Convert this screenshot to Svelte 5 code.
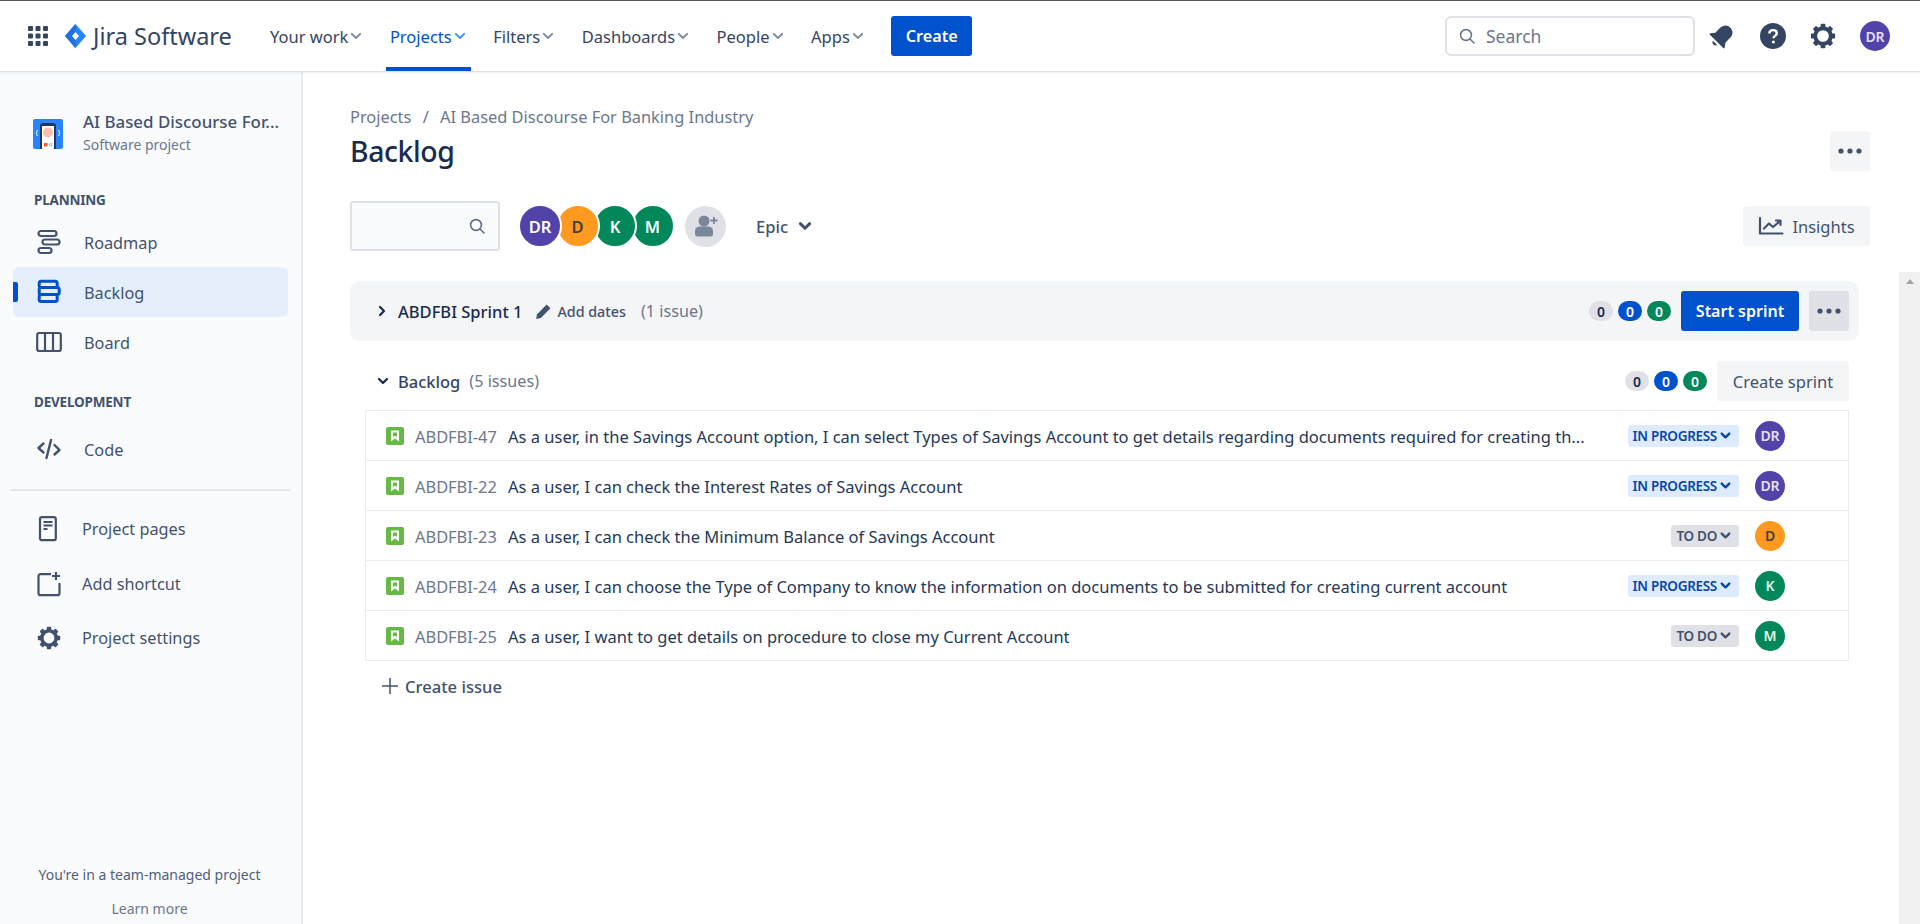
<script lang="ts">
  const nav = [
    { label: 'Your work' },
    { label: 'Projects', active: true },
    { label: 'Filters' },
    { label: 'Dashboards' },
    { label: 'People' },
    { label: 'Apps' }
  ];

  const issues = [
    { key: 'ABDFBI-47', text: 'As a user, in the Savings Account option, I can select Types of Savings Account to get details regarding documents required for creating th...', status: 'IN PROGRESS', who: 'DR', tone: 'purple' },
    { key: 'ABDFBI-22', text: 'As a user, I can check the Interest Rates of Savings Account', status: 'IN PROGRESS', who: 'DR', tone: 'purple' },
    { key: 'ABDFBI-23', text: 'As a user, I can check the Minimum Balance of Savings Account', status: 'TO DO', who: 'D', tone: 'orange' },
    { key: 'ABDFBI-24', text: 'As a user, I can choose the Type of Company to know the information on documents to be submitted for creating current account', status: 'IN PROGRESS', who: 'K', tone: 'green' },
    { key: 'ABDFBI-25', text: 'As a user, I want to get details on procedure to close my Current Account', status: 'TO DO', who: 'M', tone: 'green' }
  ];

  const team = [
    { who: 'DR', tone: 'purple' },
    { who: 'D', tone: 'orange' },
    { who: 'K', tone: 'green' },
    { who: 'M', tone: 'green' }
  ];

  const teeth = [0, 45, 90, 135, 180, 225, 270, 315];
</script>

{#snippet gear(size)}
  <svg width={size} height={size} viewBox="0 0 24 24">
    <circle cx="12" cy="12" r="7.2" fill="none" stroke="currentColor" stroke-width="3.6" />
    {#each teeth as t (t)}
      <rect x="9.8" y="0.8" width="4.4" height="4" rx="0.8" fill="currentColor" transform="rotate({t} 12 12)" />
    {/each}
  </svg>
{/snippet}

{#snippet chev(size, w)}
  <svg width={size} height={size} viewBox="0 0 12 12" fill="none">
    <path d="M2.5 4.2 6 7.7l3.5-3.5" stroke="currentColor" stroke-width={w} stroke-linecap="round" stroke-linejoin="round" />
  </svg>
{/snippet}

{#snippet dots()}
  <svg width="24" height="8" viewBox="0 0 24 8"><circle cx="3" cy="4" r="2.6" fill="#42526e" /><circle cx="12" cy="4" r="2.6" fill="#42526e" /><circle cx="21" cy="4" r="2.6" fill="#42526e" /></svg>
{/snippet}

{#snippet counts()}
  <div class="counts">
    <span class="count grey">0</span>
    <span class="count blue">0</span>
    <span class="count grn">0</span>
  </div>
{/snippet}

<div class="page">
  <header class="top">
    <svg class="waffle" width="20" height="20" viewBox="0 0 20 20" fill="#344563">
      {#each [0, 7.5, 15] as y (y)}
        {#each [0, 7.5, 15] as x (x)}
          <rect {x} {y} width="5" height="5" rx="1" />
        {/each}
      {/each}
    </svg>
    <svg class="logo" width="21" height="24" viewBox="0 0 21 24">
      <path d="M10.5 0 21 12 10.5 24 0 12Z" fill="#2684ff" />
      <path d="M10.5 0 0 12l10.5 12V16L7 12l3.5-4Z" fill="#1f6fe5" />
      <path d="M10.5 8 14 12l-3.5 4L7 12Z" fill="#fff" />
    </svg>
    <span class="brand">Jira Software</span>
    <nav class="nav">
      {#each nav as n (n.label)}
        <div class="nav-item" class:active={n.active}>
          <span>{n.label}</span>
          <span class="nav-chev">{@render chev(14, 1.8)}</span>
        </div>
      {/each}
    </nav>
    <button class="create">Create</button>
    <div class="search">
      <svg width="16" height="16" viewBox="0 0 16 16" fill="none" stroke="#6b778c" stroke-width="1.6"><circle cx="7" cy="7" r="5.4" /><path d="m11 11 4 4" stroke-linecap="round" /></svg>
      <span>Search</span>
    </div>
    <svg class="bell" width="26" height="26" viewBox="2 1 20 22" fill="#344563">
      <g transform="rotate(45 12 12)">
        <path d="M12 2c-4 0-6 3-6 6.5V14l-2.6 3.400c-.4.600 0 1.100.6 1.100h16c.6 0 1-.5.6-1.100L18 14V8.500C18 5 16 2 12 2Z" />
        <path d="M9.500 20.300h5c-.3 1.200-1.300 2-2.500 2s-2.200-.8-2.500-2Z" />
      </g>
    </svg>
    <svg class="help" width="26" height="26" viewBox="0 0 26 26">
      <circle cx="13" cy="13" r="13" fill="#344563" />
      <path d="M9.300 10.500c.1-2.200 1.700-3.400 3.800-3.400 2.200 0 3.700 1.300 3.700 3.100 0 2.700-3.300 2.700-3.300 5.100" fill="none" stroke="#fff" stroke-width="2.400" />
      <circle cx="13.400" cy="19" r="1.500" fill="#fff" />
    </svg>
    <span class="gear-top">{@render gear(26)}</span>
    <span class="avatar purple top-avatar">DR</span>
  </header>

  <div class="body">
    <aside class="side">
      <div class="project">
        <svg width="30" height="30" viewBox="0 0 30 30">
          <rect width="30" height="30" rx="2" fill="#2684ff" />
          <path d="M7 30V7a3 3 0 0 1 3-3h10a3 3 0 0 1 3 3v23Z" fill="#253858" />
          <rect x="9" y="7" width="12" height="23" fill="#fff" />
          <circle cx="15" cy="13.500" r="5" fill="#ffbdad" />
          <rect x="11" y="24" width="3.500" height="3.500" fill="#ff5630" />
          <rect x="16" y="24" width="3.500" height="3.500" fill="#b3d4ff" />
          <path d="M4.500 11c-1.200 2-1.200 4 0 6M25.500 11c1.200 2 1.200 4 0 6" stroke="#fff" fill="none" />
        </svg>
        <div class="project-text">
          <div class="project-name">AI Based Discourse For...</div>
          <div class="project-sub">Software project</div>
        </div>
      </div>

      <div class="sec">PLANNING</div>
      <div class="item">
        <svg class="ico" width="26" height="26" viewBox="0 0 26 26" fill="none" stroke="#42526e" stroke-width="2.200">
          <rect x="2.500" y="2" width="18" height="5" rx="2.500" />
          <rect x="6.500" y="10.500" width="17" height="5" rx="2.500" />
          <rect x="2.500" y="19" width="13" height="5" rx="2.500" />
        </svg>
        <span class="lbl">Roadmap</span>
      </div>
      <div class="item on">
        <svg class="ico" width="26" height="26" viewBox="0 0 26 26" fill="none" stroke="#0052cc" stroke-width="3">
          <rect x="3.200" y="2.200" width="18" height="6.200" rx="2" />
          <rect x="3.200" y="8.400" width="20" height="7" rx="2" />
          <rect x="3.200" y="15.400" width="18" height="7" rx="2" />
        </svg>
        <span class="lbl">Backlog</span>
      </div>
      <div class="item">
        <svg class="ico" width="26" height="26" viewBox="0 0 26 26" fill="none" stroke="#42526e" stroke-width="2.200">
          <rect x="1.200" y="4" width="23.600" height="18" rx="2" />
          <path d="M9 4v18M17 4v18" />
        </svg>
        <span class="lbl">Board</span>
      </div>

      <div class="sec dev">DEVELOPMENT</div>
      <div class="item">
        <svg class="ico" width="26" height="26" viewBox="0 0 26 26" fill="none" stroke="#42526e" stroke-width="2.400" stroke-linecap="round" stroke-linejoin="round">
          <path d="M7.500 7.500 2.500 12l5 4.500M18.500 9l5 5-5 4.500M15 4l-4.500 18" />
        </svg>
        <span class="lbl">Code</span>
      </div>

      <div class="rule"></div>

      <div class="item tight p1">
        <svg class="ico" width="26" height="26" viewBox="0 0 26 26" fill="none" stroke="#42526e" stroke-width="2.200">
          <rect x="4" y="1.200" width="15.800" height="23" rx="2" />
          <path d="M7.500 6h9M7.500 9.500h9M7.500 13h4" />
        </svg>
        <span>Project pages</span>
      </div>
      <div class="item tight p2">
        <svg class="ico" width="26" height="26" viewBox="0 0 26 26" fill="none" stroke="#42526e" stroke-width="2.200">
          <path d="M15 3.200H4.500a2 2 0 0 0-2 2v17a2 2 0 0 0 2 2h17a2 2 0 0 0 2-2V12" />
          <path d="M20 1v8M16 5h8" />
        </svg>
        <span>Add shortcut</span>
      </div>
      <div class="item tight p3">
        <span class="ico sgear">{@render gear(24)}</span>
        <span>Project settings</span>
      </div>

      <div class="foot">
        <div>You're in a team-managed project</div>
        <div class="learn">Learn more</div>
      </div>
    </aside>

    <main class="main">
      <div class="crumbs">Projects <i>/</i> AI Based Discourse For Banking Industry</div>
      <div class="title-row">
        <h1>Backlog</h1>
        <button class="icon-btn">{@render dots()}</button>
      </div>

      <div class="tools">
        <div class="filter">
          <svg width="16" height="16" viewBox="0 0 16 16" fill="none" stroke="#5e6c84" stroke-width="1.600"><circle cx="7" cy="7" r="5.400" /><path d="m11 11 4 4" stroke-linecap="round" /></svg>
        </div>
        <div class="team">
          {#each team as t (t.who)}
            <span class="avatar big {t.tone}">{t.who}</span>
          {/each}
        </div>
        <span class="add-person">
          <svg width="24" height="24" viewBox="0 0 24 24" fill="#7a869a">
            <circle cx="10" cy="7" r="5.500" />
            <path d="M1 17c0-3 2-4.500 4.500-4.500h9c2.500 0 4.500 1.500 4.500 4.500v3c0 1.500-1 2.500-2.500 2.500h-13C2 22.500 1 21.500 1 20Z" />
            <path d="M20 3v7M16.500 6.500h7" stroke="#7a869a" stroke-width="1.800" />
          </svg>
        </span>
        <span class="epic">Epic <span class="epic-chev">{@render chev(16, 2.200)}</span></span>
        <button class="insights">
          <svg width="26" height="20" viewBox="0 0 26 20" fill="none" stroke="#42526e" stroke-width="2.200" stroke-linecap="round" stroke-linejoin="round">
            <path d="M2 2v15.500h22.500" /><path d="m6 12.500 5-5 4 3.500 7-6M18 4.500h4.500V9" />
          </svg>
          Insights
        </button>
      </div>

      <div class="scroller">
        <div class="content">
          <div class="sprint">
            <svg class="sprint-chev" width="10" height="12" viewBox="0 0 10 12" fill="none"><path d="m3 2 4 4-4 4" stroke="#172b4d" stroke-width="2.200" stroke-linecap="round" stroke-linejoin="round" /></svg>
            <span class="sprint-name">ABDFBI Sprint 1</span>
            <svg class="pencil" width="17" height="17" viewBox="0 0 16 16" fill="#42526e"><path d="M11 1.500 14.500 5l-9 9L1 15l1-4.500Z" /></svg>
            <span class="dates">Add dates</span>
            <span class="n">(1 issue)</span>
            <span class="grow"></span>
            {@render counts()}
            <button class="start">Start sprint</button>
            <button class="icon-btn dark">{@render dots()}</button>
          </div>

          <div class="wrap">
            <div class="back-head">
              <svg class="back-chev" width="12" height="10" viewBox="0 0 12 10" fill="none"><path d="m2 3 4 4 4-4" stroke="#172b4d" stroke-width="2.200" stroke-linecap="round" stroke-linejoin="round" /></svg>
              <span class="back-name">Backlog</span>
              <span class="n">(5 issues)</span>
              <span class="grow"></span>
              {@render counts()}
              <button class="new-sprint">Create sprint</button>
            </div>

            <div class="list">
              {#each issues as i (i.key)}
                <div class="row">
                  <svg class="story" width="18" height="18" viewBox="0 0 18 18">
                    <rect width="18" height="18" rx="2" fill="#65ba43" />
                    <path d="M5 3.500h8v11l-4-3-4 3Z" fill="#fff" />
                    <path d="M7 5.500h4V10L9 8.500 7 10Z" fill="#65ba43" />
                  </svg>
                  <span class="key">{i.key}</span>
                  <span class="sum">{i.text}</span>
                  <span class="status" class:todo={i.status === 'TO DO'}>
                    {i.status}
                    {@render chev(13, 2.200)}
                  </span>
                  <span class="avatar small {i.tone}">{i.who}</span>
                </div>
              {/each}
            </div>

            <div class="add-issue">
              <svg width="16" height="16" viewBox="0 0 16 16" stroke="#42526e" stroke-width="1.500"><path d="M8 0v16M0 8h16" /></svg>
              Create issue
            </div>
          </div>
        </div>
        <div class="track"><span class="arrow"></span></div>
      </div>
    </main>
  </div>
</div>

<style>
  :global(body) {
    margin: 0; overflow: hidden; background: #fff;
    font-family: 'Noto Sans', 'Open Sans', sans-serif; color: #42526e;
  }
  .page { height: 924px; display: flex; flex-direction: column; border-top: 1px solid #555; box-sizing: border-box; }
  button { font-family: inherit; border: 0; cursor: pointer; }
  header, aside, main, span, div { box-sizing: border-box; }

  .top {
    height: 71px; flex-shrink: 0; display: flex; align-items: center; background: #fff;
    padding-left: 28px; border-bottom: 1px solid #dfe1e6; box-shadow: 0 1px 2px rgba(9, 30, 66, .08);
    position: relative; z-index: 2;
  }
  .waffle { margin-right: 17px; }
  .logo { margin-right: 7px; }
  .brand { font-size: 23.500px; color: #344563; width: 140px; white-space: nowrap; margin-right: 33px; }
  .nav { display: flex; height: 100%; }
  .nav-item {
    display: flex; align-items: center; height: 70px; padding: 0 4px; margin-right: 18.500px; gap: 1px;
    font-size: 16.500px; color: #344563; white-space: nowrap;
    border-bottom: 4px solid transparent; border-top: 4px solid transparent;
  }
  .nav-item.active { color: #0052cc; border-bottom-color: #0052cc; }
  .nav-chev { display: flex; color: #8993a4; }
  .active .nav-chev { color: #4c9aff; }
  .create {
    width: 81px; height: 40px; margin-left: 4px; border-radius: 3px; background: #0052cc; color: #fff;
    font-size: 16.200px; font-weight: 600;
  }
  .search {
    width: 250px; height: 40px; margin-left: auto; border: 2px solid #dfe1e6; border-radius: 6px;
    display: flex; align-items: center; gap: 11px; padding-left: 12px;
    font-size: 17.500px; color: #6b778c;
  }
  .bell { margin-left: 14px; }
  .help { margin-left: 25px; }
  .gear-top { display: flex; margin-left: 24px; color: #344563; }
  .top-avatar { width: 30px; height: 30px; margin: 0 30px 0 24px; font-size: 14px; }

  .avatar {
    display: inline-flex; align-items: center; justify-content: center; border-radius: 50%;
    font-weight: 600; flex-shrink: 0; color: #e4e0f5;
  }
  .purple { background: #5243aa; }
  .orange { background: #ff991f; color: #42403a; }
  .green { background: #00875a; color: #e3f4ec; }

  .body { flex: 1; display: flex; min-height: 0; }
  .side {
    width: 303px; flex-shrink: 0; background: #fafbfd; border-right: 2px solid #ebecf0;
    padding: 46px 13px 0 13px; display: flex; flex-direction: column; color: #42526e;
  }
  .project { display: flex; align-items: center; gap: 20px; padding-left: 20px; height: 32px; }
  .project-name { font-size: 16.900px; font-weight: 500; line-height: 22px; white-space: nowrap; }
  .project-sub { font-size: 14px; line-height: 24px; color: #6b778c; }

  .sec { font-size: 13.500px; font-weight: 700; letter-spacing: -0.2px; padding-left: 21px; margin-top: 39px; height: 22px; line-height: 22px; }
  .sec.dev { margin-top: 24px; }
  .item {
    display: flex; align-items: center; height: 50px; padding-left: 23px; gap: 22px;
    font-size: 16.300px; position: relative; border-radius: 6px; white-space: nowrap;
  }
  .lbl { padding-top: 2px; }
  .item.on { background: #e5effc; }
  .item.on::before { content: ''; position: absolute; left: 0; top: 15px; width: 5px; height: 20px; background: #0052cc; border-radius: 0 2px 2px 0; }
  .sec + .item { margin-top: 6px; }
  .sec.dev + .item { margin-top: 11px; }
  .ico { flex-shrink: 0; }
  .sgear { display: flex; color: #42526e; margin-left: 1px; margin-right: 1px; }
  .rule { height: 2px; background: #e4e6ec; margin: 15px 0 0 -3px; width: 280px; }
  .item.tight { gap: 20px; }
  .p1 { margin-top: 13px; }
  .p2 { margin-top: 5px; }
  .p3 { margin-top: 4px; }
  .foot { margin-top: auto; text-align: center; font-size: 14px; color: #505f79; padding-right: 2px; margin-bottom: 5px; }
  .learn { margin-top: 15px; line-height: 20px; color: #6b778c; }

  .main { flex: 1; min-width: 0; display: flex; flex-direction: column; padding-top: 34px; }
  .crumbs { margin-left: 47px; font-size: 16.400px; line-height: 22px; color: #6b778c; }
  .crumbs i { font-style: normal; margin: 0 7px; }
  .title-row { display: flex; align-items: center; justify-content: space-between; margin: 3px 50px 0 47px; height: 40px; }
  h1 { margin: 0; font-size: 28.400px; font-weight: 500; color: #172b4d; letter-spacing: -0.4px; }
  .icon-btn { width: 40px; height: 40px; background: #f4f5f7; border-radius: 3px; display: flex; align-items: center; justify-content: center; padding: 0; }
  .icon-btn.dark { background: #dfe1e6; margin-left: 10px; }

  .tools { display: flex; align-items: center; height: 50px; margin: 30px 50px 0 47px; flex-shrink: 0; }
  .filter {
    width: 150px; height: 50px; border: 2px solid #dfe1e6; border-radius: 3px; background: #fafbfc;
    display: flex; align-items: center; justify-content: flex-end; padding-right: 13px;
  }
  .team { display: flex; margin-left: 18px; }
  .big { width: 44px; height: 44px; font-size: 16.500px; color: #fff; margin-right: -6.500px; border: 2px solid #fff; }
  .big.orange { color: #42403a; }
  .big:nth-child(1) { z-index: 4; } .big:nth-child(2) { z-index: 3; } .big:nth-child(3) { z-index: 2; }
  .add-person {
    width: 41px; height: 41px; margin-left: 17px; border-radius: 50%; background: #dfe1e6;
    display: flex; align-items: center; justify-content: center;
  }
  .epic { margin-left: 30px; font-size: 16.500px; font-weight: 500; display: flex; align-items: center; gap: 9px; }
  .epic-chev { display: flex; }
  .insights {
    margin-left: auto; width: 127px; height: 40px; background: #f4f5f7; border-radius: 3px;
    display: flex; align-items: center; justify-content: center; gap: 8px; padding: 0;
    font-size: 16.500px; color: #42526e;
  }

  .scroller { flex: 1; display: flex; min-height: 0; margin-top: 21px; }
  .content { flex: 1; min-width: 0; padding: 9px 0 0 47px; }
  .track { width: 21px; flex-shrink: 0; background: #f1f1f1; display: flex; justify-content: center; padding-top: 7px; }
  .arrow { width: 0; height: 0; border-left: 4.500px solid transparent; border-right: 4.500px solid transparent; border-bottom: 5px solid #a3a3a3; }

  .sprint {
    height: 60px; margin-right: 40px; background: #f4f5f7; border-radius: 10px;
    display: flex; align-items: center; padding: 0 10px 0 27px;
  }
  .sprint-chev { margin-right: 11px; }
  .sprint-name { font-size: 16.500px; font-weight: 500; color: #172b4d; white-space: nowrap; }
  .pencil { margin-left: 13px; }
  .dates { margin-left: 5px; font-size: 14.300px; font-weight: 500; }
  .n { margin-left: 15px; font-size: 16.200px; color: #6b778c; }
  .back-head .n { margin-left: 9px; }
  .grow { flex: 1; }
  .counts { display: flex; gap: 5px; }
  .count {
    width: 24px; height: 20px; border-radius: 10px; font-size: 14px; font-weight: 600;
    display: flex; align-items: center; justify-content: center; background: #dfe1e6; color: #172b4d;
  }
  .count.blue { background: #0052cc; color: #fff; }
  .count.grn { background: #00875a; color: #fff; }
  .start {
    width: 118px; height: 40px; margin-left: 10px; background: #0052cc; color: #fff; border-radius: 3px;
    font-size: 16px; font-weight: 600;
  }

  .wrap { margin: 0 50px 0 15px; }
  .back-head { display: flex; align-items: center; height: 40px; margin-top: 20px; }
  .back-chev { margin-left: 12px; margin-right: 9px; }
  .back-name { font-size: 16.500px; font-weight: 500; color: #344563; }
  .new-sprint {
    width: 132px; height: 40px; margin-left: 10px; background: #f4f5f7; border-radius: 3px;
    font-size: 16.500px; color: #42526e;
  }
  .list { border: 1.500px solid #ebecf0; margin-top: 9px; }
  .row { height: 50px; display: flex; align-items: center; border-bottom: 1.500px solid #ebecf0; padding-left: 20px; padding-right: 63px; }
  .row:last-child { border-bottom: 0; height: 49px; }
  .story { flex-shrink: 0; }
  .key { margin-left: 11px; width: 93px; flex-shrink: 0; font-size: 16.400px; color: #6b778c; white-space: nowrap; padding-top: 2px; }
  .sum { flex: 1; min-width: 0; white-space: nowrap; font-size: 16.500px; color: #253858; margin-right: 40px; padding-top: 2px; }
  .status {
    display: flex; align-items: center; height: 22px; padding: 0 7px 0 5px; border-radius: 3px; gap: 2px;
    background: #deebff; color: #0747a6; font-size: 13.500px; font-weight: 600; letter-spacing: -0.3px; white-space: nowrap; flex-shrink: 0;
  }
  .status.todo { background: #dfe1e6; color: #42526e; }
  .small { width: 30px; height: 30px; margin-left: 16px; font-size: 14px; }
  .add-issue { display: flex; align-items: center; gap: 7px; height: 40px; margin: 5px 0 0 17px; font-size: 16.600px; font-weight: 500; }
</style>
